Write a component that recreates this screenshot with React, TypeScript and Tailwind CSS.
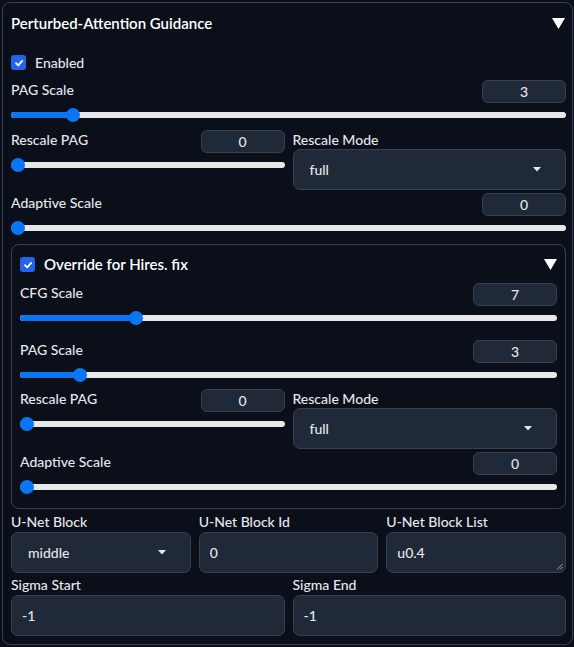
import React from "react";

const font = { fontFamily: "Lato, 'Noto Sans', sans-serif" };

function Check({ size = 15 }: { size?: number }) {
  return (
    <div className="flex shrink-0 items-center justify-center rounded-[3px] bg-[#2563eb]" style={{ width: size, height: size }}>
      <svg width="10" height="10" viewBox="0 0 10 10">
        <path d="M2 5.2 L4.2 7.3 L8.2 2.8" stroke="white" strokeWidth="1.8" fill="none" strokeLinecap="round" strokeLinejoin="round" />
      </svg>
    </div>
  );
}

function Tri() {
  return (
    <svg width="13" height="11" viewBox="0 0 13 11">
      <path d="M0 0 L13 0 L6.5 11 Z" fill="white" />
    </svg>
  );
}

function Slider({ pct }: { pct: number }) {
  return (
    <div className="relative h-[14px] w-full">
      <div className="absolute left-0 right-0 top-[4px] h-[6px] rounded-full bg-[#e8e8e8]" />
      <div
        className="absolute left-0 top-[4px] h-[6px] rounded-full bg-[#0b76f5]"
        style={{ width: `calc(7px + (100% - 14px) * ${pct})` }}
      />
      <div
        className="absolute top-0 h-[14px] w-[14px] rounded-full bg-[#0b76f5]"
        style={{ left: `calc((100% - 14px) * ${pct})` }}
      />
    </div>
  );
}

function NumBox({ v }: { v: string }) {
  return (
    <div className="flex h-[23px] w-[84px] items-center justify-center rounded-[6px] border border-[#374151] bg-[#1f2937] text-[14px] font-medium text-[#e5e7eb]">
      {v}
    </div>
  );
}

function SliderBlock({ label, v, pct }: { label: string; v: string; pct: number }) {
  return (
    <div className="flex flex-col">
      <div className="flex h-[23px] items-start justify-between">
        <span className="text-[14px] font-medium leading-[19px] text-[#e5e7eb]">{label}</span>
        <NumBox v={v} />
      </div>
      <div className="mt-[5px]">
        <Slider pct={pct} />
      </div>
    </div>
  );
}

function Dropdown({ v }: { v: string }) {
  return (
    <div className="flex h-[41px] items-center justify-between rounded-[7px] border border-[#374151] bg-[#1f2937] pl-[16px] pr-[24px] text-[14px] font-medium text-[#e5e7eb]">
      <span>{v}</span>
      <svg width="8" height="5" viewBox="0 0 8 5">
        <path d="M0 0 L8 0 L4 4.5 Z" fill="#e5e7eb" />
      </svg>
    </div>
  );
}

function RescaleRow() {
  return (
    <div className="grid grid-cols-2 gap-[8px]">
      <div className="flex flex-col">
        <div className="flex h-[23px] items-start justify-between">
          <span className="text-[14px] font-medium leading-[20px] text-[#e5e7eb]">Rescale PAG</span>
          <NumBox v="0" />
        </div>
        <div className="mt-[5px]">
          <Slider pct={0} />
        </div>
      </div>
      <div className="flex flex-col">
        <div className="flex h-[19px] items-start text-[14px] font-medium leading-[19px] text-[#e5e7eb]">Rescale Mode</div>
        <Dropdown v="full" />
      </div>
    </div>
  );
}

function TextInput({ v, resize }: { v: string; resize?: boolean }) {
  return (
    <div className="relative flex h-[41px] items-center rounded-[7px] border border-[#374151] bg-[#1f2937] px-[10px] text-[14px] font-medium text-[#e5e7eb]">
      {v}
      {resize && (
        <svg className="absolute bottom-[2px] right-[2px]" width="7" height="7" viewBox="0 0 7 7">
          <path d="M1 6.5 L6.5 1 M4 6.5 L6.5 4" stroke="#9ca3af" strokeWidth="1" />
        </svg>
      )}
    </div>
  );
}

function Labeled({ label, children }: { label: string; children: React.ReactNode }) {
  return (
    <div className="flex flex-col">
      <div className="flex h-[21px] items-center text-[14px] font-medium text-[#e5e7eb]">{label}</div>
      {children}
    </div>
  );
}

export default function App() {
  return (
    <div className="h-[647px] w-[574px] bg-[#0b0f19] pl-[2px] pt-[2px]" style={font}>
      <div className="flex h-[643px] w-[571px] flex-col rounded-[8px] border border-[#374151] pl-[8px] pr-[6px] pt-[9px]">
        <div className="flex h-[22px] items-center justify-between">
          <span className="text-[15px] font-semibold text-white">Perturbed-Attention Guidance</span>
          <div className="mr-[1px]">
            <Tri />
          </div>
        </div>
        <div className="mt-[21px] flex h-[15px] items-center gap-[9px]">
          <Check />
          <span className="text-[14px] font-medium text-[#e5e7eb]">Enabled</span>
        </div>
        <div className="mt-[10px]">
          <SliderBlock label="PAG Scale" v="3" pct={0.102} />
        </div>
        <div className="mt-[8px]">
          <RescaleRow />
        </div>
        <div className="mt-[3px]">
          <SliderBlock label="Adaptive Scale" v="0" pct={0} />
        </div>
        <div className="mt-[9px] rounded-[8px] border border-[#374151] px-[8px] pb-[14px] pt-[12px]">
          <div className="flex h-[15px] items-center justify-between">
            <div className="flex items-center gap-[9px]">
              <Check />
              <span className="text-[15px] font-semibold text-white">Override for Hires. fix</span>
            </div>
            <Tri />
          </div>
          <div className="mt-[11px]">
            <SliderBlock label="CFG Scale" v="7" pct={0.209} />
          </div>
          <div className="mt-[15px]">
            <SliderBlock label="PAG Scale" v="3" pct={0.102} />
          </div>
          <div className="mt-[7px]">
            <RescaleRow />
          </div>
          <div className="mt-[3px]">
            <SliderBlock label="Adaptive Scale" v="0" pct={0} />
          </div>
        </div>
        <div className="mt-[2px] grid grid-cols-3 gap-[8px]">
          <Labeled label="U-Net Block">
            <Dropdown v="middle" />
          </Labeled>
          <Labeled label="U-Net Block Id">
            <TextInput v="0" />
          </Labeled>
          <Labeled label="U-Net Block List">
            <TextInput v="u0.4" resize />
          </Labeled>
        </div>
        <div className="mt-[1px] grid grid-cols-2 gap-[8px]">
          <Labeled label="Sigma Start">
            <TextInput v="-1" />
          </Labeled>
          <Labeled label="Sigma End">
            <TextInput v="-1" />
          </Labeled>
        </div>
      </div>
    </div>
  );
}
